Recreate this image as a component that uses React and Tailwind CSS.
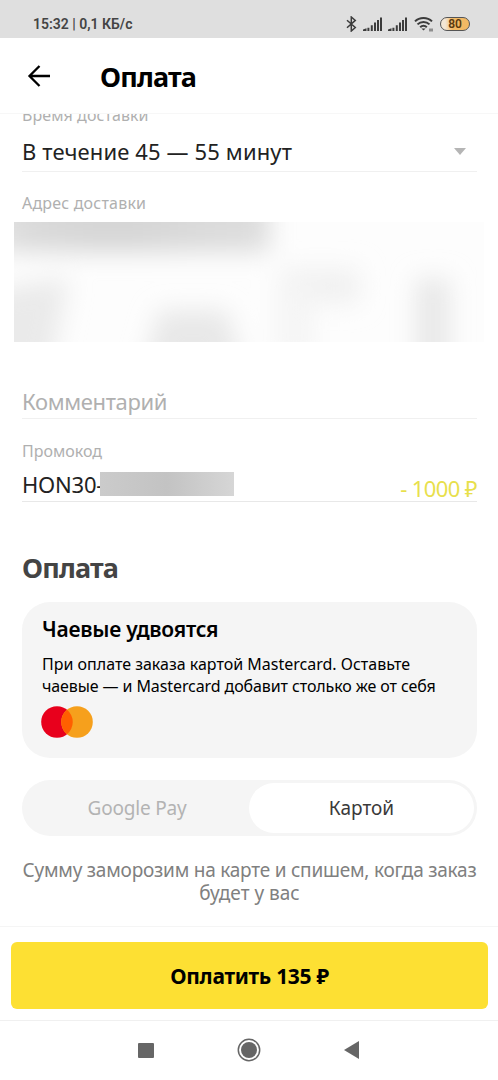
import React from 'react';

const SignalIcon = () => (
  <svg width="20" height="14" viewBox="0 0 20 14" fill="#3c3c3c">
    <path d="M0 14v-1.500l3.500-1.200V14zM4.400 10.800h2V14H4.400zM7.800 8.300h2V14h-2zM11 5.600h2V14h-2zM14 3h2v11h-2zM17 .5h2V14h-2z" />
  </svg>
);

const BluetoothIcon = () => (
  <svg width="11" height="16" viewBox="0 0 11 16" fill="none" stroke="#3c3c3c" strokeWidth="1.500">
    <path d="M1 4.200l8.300 7.300L5.300 15V1l4 3.400L1 11.800" />
  </svg>
);

const WifiIcon = () => (
  <svg width="20" height="16" viewBox="0 0 20 16" fill="none" stroke="#3c3c3c" strokeWidth="2">
    <path d="M1 5.400c4.600-4.600 12.400-4.600 17 0M3.500 8.400c3.300-3.300 8.700-3.300 12 0M6.200 11.200c1.900-1.900 4.700-1.900 6.600 0" />
    <path d="M7.400 12.500h4.200L9.500 14.600z" fill="#3c3c3c" stroke="none" />
    <path d="M16 12.500v3M18 12.500v3" strokeWidth="1" />
  </svg>
);

const StatusBar = () => (
  <div className="flex h-[38px] items-center bg-[#dfdfdf] pt-[9px] pr-[28px] pl-[33px] text-[#444]">
    <span className="mt-px font-[Roboto] text-[14px] font-semibold">15:32 | 0,1 КБ/с</span>
    <div className="ml-auto flex items-center">
      <BluetoothIcon />
      <div className="ml-[6px]">
        <SignalIcon />
      </div>
      <div className="ml-[5px]">
        <SignalIcon />
      </div>
      <div className="ml-[6px]">
        <WifiIcon />
      </div>
      <div className="ml-[6px] flex h-[14px] w-[30px] items-center justify-center rounded-full border-[1.500px] border-[#555] bg-gradient-to-r from-[#f3e6d4] from-15% via-[#f2b964] via-40% to-[#f2b964] font-[Roboto] text-[12px] leading-none font-semibold text-[#5a3a10]">
        80
      </div>
    </div>
  </div>
);

const Header = () => (
  <header className="flex h-[76px] items-center border-b border-[#f7f7f7] bg-white pl-[27px]">
    <svg width="24" height="24" viewBox="0 0 24 24" fill="none" stroke="#000" strokeWidth="2.300">
      <path d="M23 12H2.500M12.500 2L2.500 12l10 10" />
    </svg>
    <h1 className="mt-[2px] ml-[49px] text-[27px] leading-9 font-bold tracking-[-0.8px] text-black">Оплата</h1>
  </header>
);

// address hidden behind a heavy blur
const HiddenAddress = () => (
  <svg className="mt-[9px] ml-[-8px] block" width="470" height="120" viewBox="0 0 470 120">
    <defs>
      <filter id="soft" x="-60%" y="-100%" width="220%" height="300%">
        <feGaussianBlur stdDeviation="12" />
      </filter>
      <linearGradient id="band" x1="0" x2="1" y1="0" y2="0">
        <stop offset="0" stopColor="#e8e8e8" />
        <stop offset="0.15" stopColor="#dadada" />
        <stop offset="0.45" stopColor="#d5d5d5" />
        <stop offset="1" stopColor="#dedede" />
      </linearGradient>
    </defs>
    <rect width="470" height="120" fill="#fdfdfd" />
    <g filter="url(#soft)">
      <rect x="-30" y="-50" width="286" height="80" fill="url(#band)" />
      <path d="M-30 70L55 55L34 160H-30z" fill="#eaeaea" />
      <path d="M145 88h68l20 72H125z" fill="#e8e8e8" />
      <rect x="266" y="46" width="80" height="36" fill="#f1f1f1" />
      <rect x="262" y="60" width="38" height="80" fill="#f5f5f5" />
      <rect x="402" y="56" width="34" height="110" fill="#e8e8e8" />
    </g>
  </svg>
);

const MastercardLogo = () => (
  <svg className="mt-[9px] ml-[-1px]" width="52" height="32" viewBox="0 0 52 32">
    <circle cx="16" cy="16" r="15.800" fill="#e8001c" />
    <circle cx="36" cy="16" r="15.800" fill="#f6a01c" />
    <path d="M26 3.800a15.800 15.800 0 0 1 0 24.400a15.800 15.800 0 0 1 0-24.400z" fill="#ff5f00" />
  </svg>
);

const NavBar = () => (
  <nav className="flex h-[60px] items-center justify-between border-t border-[#f0f0f0] pr-[139px] pb-px pl-[138px]">
    <div className="h-[15px] w-[16px] rounded-[1px] bg-[#666]" />
    <svg width="24" height="24" viewBox="0 0 24 24">
      <circle cx="12" cy="12" r="10.700" fill="none" stroke="#666" strokeWidth="1.500" />
      <circle cx="12" cy="12" r="8" fill="#666" />
    </svg>
    <svg width="15" height="18" viewBox="0 0 15 18">
      <path d="M15 0v18L0 9z" fill="#666" />
    </svg>
  </nav>
);

const App = () => {
  return (
    <div className="flex h-[1080px] w-[498px] flex-col overflow-hidden bg-white font-['Noto_Sans',sans-serif] text-[#222]">
      <StatusBar />
      <Header />

      <main className="h-[812px] overflow-hidden pr-[21px] pl-[22px]">
        <p className="-mt-[9px] text-[16px] leading-5 tracking-[0.08px] text-[#b0b0b0]">Время доставки</p>
        <div className="flex h-[47px] items-center justify-between border-b border-[#f0f0f0] pt-[6px]">
          <span className="text-[22px] leading-[30px] tracking-[0.13px]">В течение 45 — 55 минут</span>
          <svg className="mr-[11px]" width="12" height="7" viewBox="0 0 12 7">
            <path d="M0 0h12L6 7z" fill="#b5b5b5" />
          </svg>
        </div>

        <p className="mt-[21px] text-[16px] leading-5 tracking-[0.2px] text-[#b0b0b0]">Адрес доставки</p>
        <HiddenAddress />

        <div className="mt-[44px] h-[33px] border-b border-[#f0f0f0] text-[22px] leading-[30px] tracking-[-0.36px] text-[#b0b0b0]">
          Комментарий
        </div>

        <p className="mt-[22px] text-[16px] leading-5 text-[#b0b0b0]">Промокод</p>
        <div className="mt-[8px] flex h-[33px] justify-between border-b border-[#e8e8e8] text-[22px] leading-[30px]">
          <div className="flex">
            <span className="w-[78px] whitespace-nowrap tracking-[-0.2px]">HON30-</span>
            <div className="relative mt-[3px] h-[24px] w-[134px] bg-gradient-to-r from-[#cbcbcb] via-[#c3c3c3] to-[#d6d6d6]" />
          </div>
          <span className="pt-[4px] tracking-[-0.6px] text-[#e8e04c]">- 1000 ₽</span>
        </div>

        <h2 className="mt-[48px] text-[27px] leading-9 font-bold tracking-[-0.8px] text-[#444]">Оплата</h2>

        <section className="mt-[16px] h-[156px] rounded-[28px] bg-[#f5f5f5] px-[20px] pt-[12px] text-black">
          <h3 className="text-[21px] leading-[30px] font-semibold tracking-[-0.24px]">Чаевые удвоятся</h3>
          <p className="mt-[9px] text-[16px] leading-[22px] whitespace-nowrap">
            При оплате заказа картой Mastercard. Оставьте
            <br />
            <span className="tracking-[-0.1px]">чаевые — и Mastercard добавит столько же от себя</span>
          </p>
          <MastercardLogo />
        </section>

        <div className="mt-[22px] flex h-[56px] rounded-full bg-[#f5f5f5] py-[3px] pr-[3px] text-[19px]">
          <button className="w-[227px] pl-[3px] tracking-[-0.2px] text-[#b3b3b3]">Google Pay</button>
          <button className="flex-1 rounded-full bg-white text-[#3a3a3a]">Картой</button>
        </div>

        <p className="mt-[23px] text-center text-[19px] leading-[22.500px] tracking-[-0.22px] whitespace-nowrap text-[#808080]">
          Сумму заморозим на карте и спишем, когда заказ
          <br />
          <span className="tracking-normal">будет у вас</span>
        </p>
      </main>

      <footer className="h-[94px] border-t border-[#f5f5f5] pt-[15px] pr-[10px] pl-[11px]">
        <button className="h-[67px] w-full rounded-[6px] bg-[#fde033] pt-[2px] text-[21px] font-bold tracking-[-0.3px] text-black">
          Оплатить 135 ₽
        </button>
      </footer>
      <NavBar />
    </div>
  );
};

export default App;
